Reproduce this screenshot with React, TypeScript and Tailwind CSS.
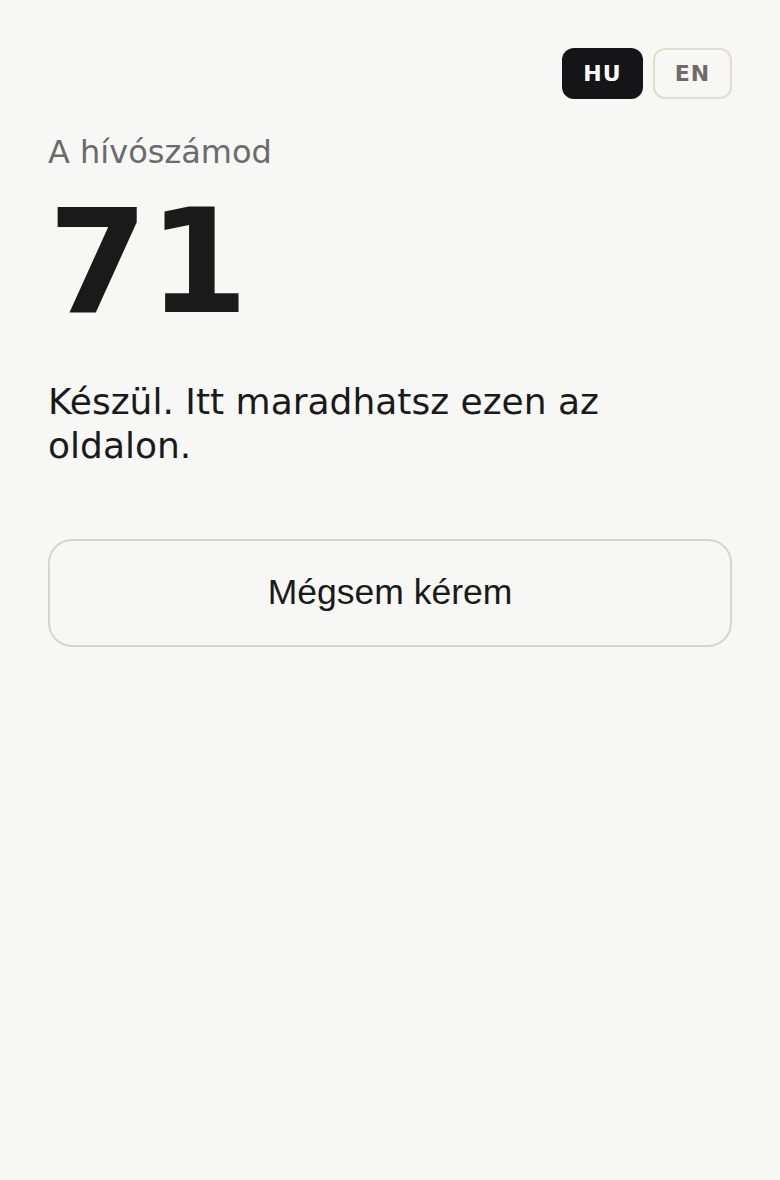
import React from "react";

export default function App() {
  return (
    <div className="min-h-[1180px] w-full bg-[#f7f7f5] px-12 pt-12" style={{ fontFamily: '"DejaVu Sans", sans-serif' }}>
      <div className="flex justify-end gap-[10px]">
        <button className="h-[51px] w-[81px] rounded-[12px] bg-[#151417] text-[22px] font-bold tracking-[1px] text-white" style={{ fontFamily: '"DejaVu Sans", sans-serif' }}>
          HU
        </button>
        <button className="h-[51px] w-[79px] rounded-[12px] border-2 border-[#e3dcd0] text-[22px] font-bold tracking-[1px] text-[#726b65]" style={{ fontFamily: '"DejaVu Sans", sans-serif' }}>
          EN
        </button>
      </div>
      <div className="mt-[33px] text-[32px] leading-[40px] text-[#6b6b6b]">A hívószámod</div>
      <div className="mt-[18px] text-[144px] font-bold leading-[144px] text-[#1a1a1a]">71</div>
      <div className="mt-[46px] text-[36px] leading-[44px] text-[#1a1a1a]">Készül. Itt maradhatsz ezen az oldalon.</div>
      <button
        className="mt-[71px] flex h-[108px] w-full items-center justify-center rounded-[24px] border-2 border-[#d6d5d1] text-[35.5px] text-[#1a1a1a]"
        style={{ fontFamily: '"Liberation Sans", Arial, sans-serif' }}
      >
        Mégsem kérem
      </button>
    </div>
  );
}
